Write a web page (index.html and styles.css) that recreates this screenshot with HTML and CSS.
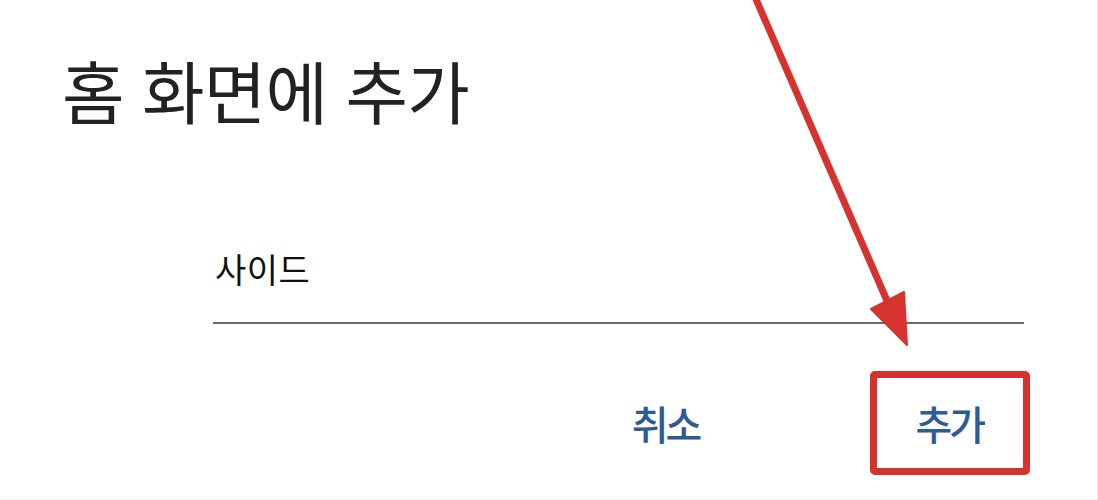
FILE: index.html
```html
<!DOCTYPE html>
<html lang="ko">
<head>
<meta charset="utf-8">
<link rel="stylesheet" href="styles.css">
</head>
<body>
<div class="dialog">
  <h1 class="title">홈 화면에 추가</h1>
  <div class="field">
    <div class="field-text">사이드</div>
  </div>
  <div class="actions">
    <button class="btn">취소</button>
    <button class="btn btn-highlight">추가</button>
  </div>
  <svg class="annotation" width="1098" height="500" viewBox="0 0 1098 500" aria-hidden="true">
    <line x1="752" y1="-10" x2="888" y2="303" stroke="#d6332f" stroke-width="7" stroke-linecap="round"/>
    <polygon points="907,345 871,309 904,292" fill="#d6332f" stroke="#d6332f" stroke-width="2" stroke-linejoin="round"/>
  </svg>
</div>
</body>
</html>
```
FILE: styles.css
```css
html, body {
  margin: 0;
  padding: 0;
  background: #ffffff;
}
body {
  font-family: "Noto Sans CJK KR", "Noto Sans", sans-serif;
}
.dialog {
  position: relative;
  width: 1098px;
  height: 500px;
  box-sizing: border-box;
  padding: 50px 67px 0 62px;
  background: #ffffff;
  border-right: 1px solid #e4e4e4;
  border-bottom: 1px solid #ececec;
  overflow: hidden;
}
.title {
  margin: 0;
  font-size: 68px;
  line-height: 80px;
  font-weight: 400;
  letter-spacing: -0.8px;
  color: #222222;
}
.field {
  margin: 119px 6px 0 151px;
  padding-left: 2px;
  border-bottom: 2px solid #6a6a6a;
  padding-bottom: 33px;
}
.field-text {
  font-size: 34px;
  line-height: 40px;
  letter-spacing: 0.5px;
  color: #111111;
}
.actions {
  display: flex;
  justify-content: flex-end;
  gap: 124px;
  margin-top: 47px;
}
.btn {
  font-family: inherit;
  font-size: 40px;
  font-weight: 500;
  line-height: 50px;
  letter-spacing: -3px;
  color: #2f5b94;
  background: transparent;
  border: 7px solid transparent;
  border-radius: 5px;
  padding: 20px 40px 20px 38px;
  margin: 0;
}
.btn-highlight {
  border-color: #d6332f;
}
.annotation {
  position: absolute;
  left: 0;
  top: 0;
  pointer-events: none;
}
```
